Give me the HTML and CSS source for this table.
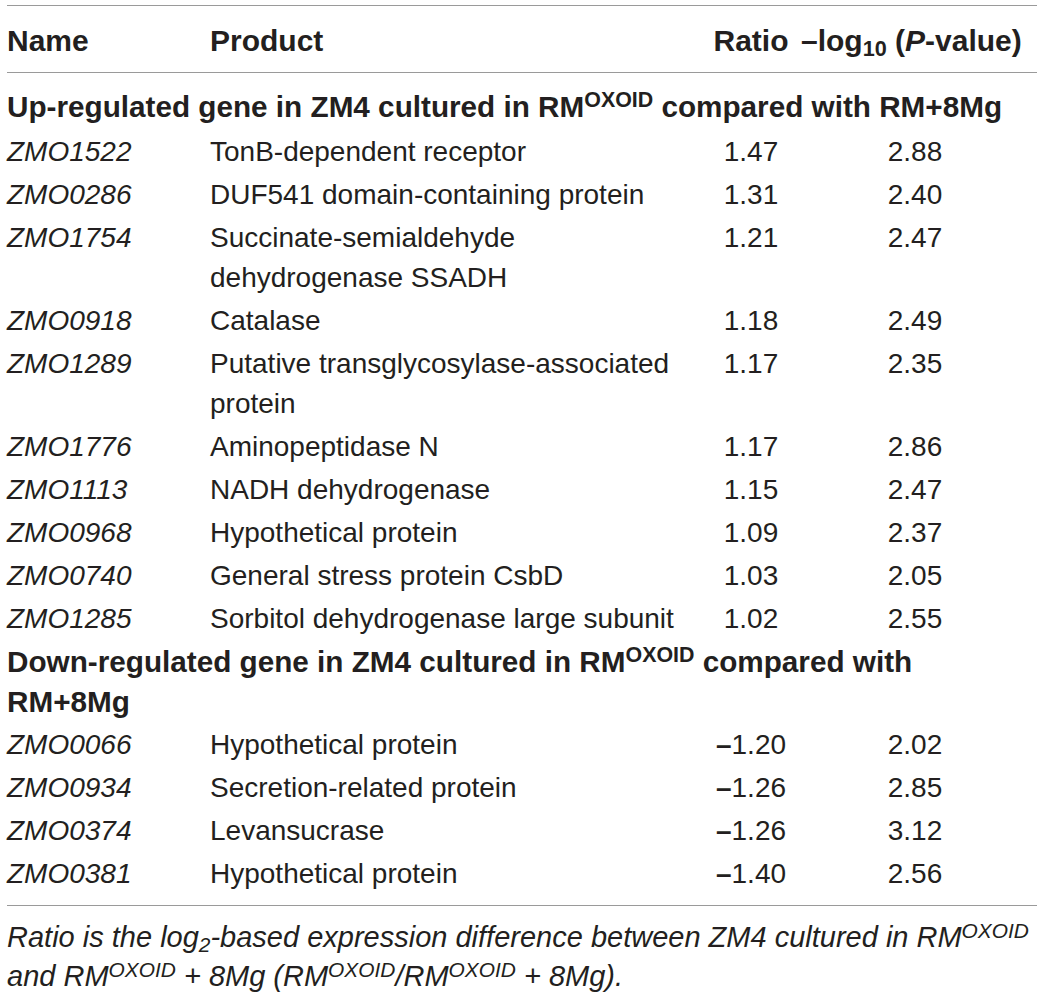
FILE: index.html
```html
<!DOCTYPE html>
<html lang="en">

<head>
    <meta charset="UTF-8">
    <meta name="viewport" content="width=device-width, initial-scale=1.0">
    <title>ZM4 differentially expressed genes</title>
    <link rel="stylesheet" href="styles.css">
</head>

<body>
    <!-- Expression table -->
    <table class="gene-table">
        <colgroup>
            <col class="col-name">
            <col class="col-product">
            <col class="col-ratio">
            <col class="col-p">
        </colgroup>
        <thead>
            <tr>
                <th>Name</th>
                <th>Product</th>
                <th class="num">Ratio</th>
                <th class="num">–log<sub>10</sub> (<i>P</i>-value)</th>
            </tr>
        </thead>
        <tbody>
            <tr class="group group-first">
                <td colspan="4">Up-regulated gene in ZM4 cultured in RM<sup>OXOID</sup> compared with RM+8Mg</td>
            </tr>
            <tr>
                <td class="gene">ZMO1522</td>
                <td>TonB-dependent receptor</td>
                <td class="num">1.47</td>
                <td class="num">2.88</td>
            </tr>
            <tr>
                <td class="gene">ZMO0286</td>
                <td>DUF541 domain-containing protein</td>
                <td class="num">1.31</td>
                <td class="num">2.40</td>
            </tr>
            <tr>
                <td class="gene">ZMO1754</td>
                <td>Succinate-semialdehyde dehydrogenase SSADH</td>
                <td class="num">1.21</td>
                <td class="num">2.47</td>
            </tr>
            <tr>
                <td class="gene">ZMO0918</td>
                <td>Catalase</td>
                <td class="num">1.18</td>
                <td class="num">2.49</td>
            </tr>
            <tr>
                <td class="gene">ZMO1289</td>
                <td>Putative transglycosylase-associated protein</td>
                <td class="num">1.17</td>
                <td class="num">2.35</td>
            </tr>
            <tr>
                <td class="gene">ZMO1776</td>
                <td>Aminopeptidase N</td>
                <td class="num">1.17</td>
                <td class="num">2.86</td>
            </tr>
            <tr>
                <td class="gene">ZMO1113</td>
                <td>NADH dehydrogenase</td>
                <td class="num">1.15</td>
                <td class="num">2.47</td>
            </tr>
            <tr>
                <td class="gene">ZMO0968</td>
                <td>Hypothetical protein</td>
                <td class="num">1.09</td>
                <td class="num">2.37</td>
            </tr>
            <tr>
                <td class="gene">ZMO0740</td>
                <td>General stress protein CsbD</td>
                <td class="num">1.03</td>
                <td class="num">2.05</td>
            </tr>
            <tr>
                <td class="gene">ZMO1285</td>
                <td>Sorbitol dehydrogenase large subunit</td>
                <td class="num">1.02</td>
                <td class="num">2.55</td>
            </tr>
            <tr class="group">
                <td colspan="4">Down-regulated gene in ZM4 cultured in RM<sup>OXOID</sup> compared with<br>RM+8Mg</td>
            </tr>
            <tr>
                <td class="gene">ZMO0066</td>
                <td>Hypothetical protein</td>
                <td class="num"><span class="neg">–</span>1.20</td>
                <td class="num">2.02</td>
            </tr>
            <tr>
                <td class="gene">ZMO0934</td>
                <td>Secretion-related protein</td>
                <td class="num"><span class="neg">–</span>1.26</td>
                <td class="num">2.85</td>
            </tr>
            <tr>
                <td class="gene">ZMO0374</td>
                <td>Levansucrase</td>
                <td class="num"><span class="neg">–</span>1.26</td>
                <td class="num">3.12</td>
            </tr>
            <tr>
                <td class="gene">ZMO0381</td>
                <td>Hypothetical protein</td>
                <td class="num"><span class="neg">–</span>1.40</td>
                <td class="num">2.56</td>
            </tr>
        </tbody>
    </table>

    <!-- Footnote -->
    <p class="footnote">Ratio is the log<sub>2</sub>-based expression difference between ZM4 cultured in RM<sup>OXOID</sup><br>
        and RM<sup>OXOID</sup> + 8Mg (RM<sup>OXOID</sup>/RM<sup>OXOID</sup> + 8Mg).</p>
</body>

</html>
```

FILE: styles.css
```css
body {
    font-family: "Liberation Sans", Arial, sans-serif;
    margin: 0;
    padding: 5px 4px 0 7px;
    background-color: white;
    color: #231f20;
}

.gene-table {
    width: 1030px;
    border-collapse: collapse;
    table-layout: fixed;
    font-size: 28px;
    line-height: 40px;
}

.col-name {
    width: 203px;
}

.col-product {
    width: 493px;
}

.col-ratio {
    width: 96px;
}

.col-p {
    width: 238px;
}

th {
    text-align: left;
    font-size: 30px;
    font-weight: bold;
    padding: 15px 0 11px;
    border-top: 1px solid #9a9a9a;
    border-bottom: 1px solid #9a9a9a;
}

td {
    padding: 1.5px 0;
    vertical-align: top;
}

.num {
    text-align: center;
}

th.num:last-child {
    padding-left: 2px;
    text-align: left;
}

td.num:last-child {
    padding-right: 6px;
}

.gene {
    font-style: italic;
}

.group td {
    font-size: 29.7px;
    font-weight: bold;
}

.group-first td {
    padding: 14px 0 3.5px;
}

tbody tr:last-child td {
    padding-bottom: 11px;
    border-bottom: 1px solid #9a9a9a;
}

.neg {
    font-weight: bold;
}

sup {
    font-size: 0.72em;
    line-height: 0;
    vertical-align: 0.45em;
}

sub {
    font-size: 0.72em;
    line-height: 0;
    vertical-align: -0.25em;
}

.footnote {
    width: 1030px;
    margin: 12px 0 0;
    font-size: 29px;
    line-height: 39px;
    font-style: italic;
    white-space: nowrap;
}
```
